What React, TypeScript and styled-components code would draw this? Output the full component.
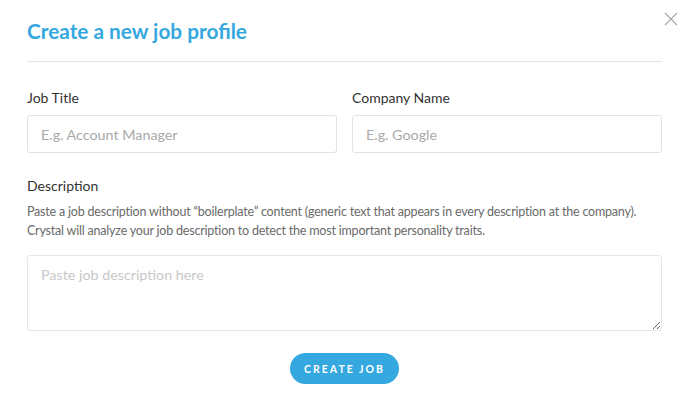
import React from "react";
import styled, { createGlobalStyle } from "styled-components";

const GlobalStyle = createGlobalStyle`
  html, body {
    margin: 0;
    padding: 0;
    background: #fff;
    font-family: Lato, "Open Sans", sans-serif;
  }
  * { box-sizing: border-box; }
`;

const Modal = styled.div`
  position: relative;
  width: 688px;
  height: 411px;
  padding: 16px 26px 0 27px;
  background: #fff;
`;

const Title = styled.h2`
  margin: 0;
  font-size: 20.8px;
  font-weight: 700;
  line-height: 30px;
  color: #35a8e0;
`;

const Divider = styled.hr`
  margin: 15px 0 0;
  border: 0;
  border-top: 1px solid #e3e3e3;
`;

const CloseButton = styled.button`
  position: absolute;
  top: 10px;
  right: 8px;
  width: 18px;
  height: 18px;
  padding: 0;
  border: 0;
  background: none;
  color: #a8a8a8;
  cursor: pointer;
`;

const Row = styled.div`
  display: grid;
  grid-template-columns: 1fr 1fr;
  gap: 15px;
  margin-top: 26px;
`;

const Field = styled.div`
  display: flex;
  flex-direction: column;
`;

const Label = styled.label<{ $gap?: number }>`
  font-size: 14px;
  line-height: 20px;
  color: #333;
  margin-bottom: ${(p) => p.$gap ?? 7}px;
`;

const Input = styled.input`
  height: 38px;
  padding: 0 13px;
  border: 1px solid #e2e2e2;
  border-radius: 3px;
  font-family: inherit;
  font-size: 14.3px;
  color: #333;
  outline: none;
  &::placeholder {
    color: #a9a9a9;
  }
`;

const Description = styled.div`
  margin-top: 23px;
  display: flex;
  flex-direction: column;
`;

const Help = styled.p`
  margin: 0;
  font-size: 12.5px;
  letter-spacing: -0.2px;
  line-height: 19px;
  color: #6a6a6a;
  white-space: nowrap;
`;

const TextArea = styled.textarea`
  margin-top: 15px;
  height: 76px;
  padding: 9px 13px;
  border: 1px solid #e6e6e6;
  border-radius: 3px;
  font-family: inherit;
  font-size: 14.3px;
  line-height: 20px;
  color: #333;
  resize: vertical;
  outline: none;
  &::placeholder {
    color: #c8c8c8;
  }
`;

const Actions = styled.div`
  display: flex;
  justify-content: center;
  margin-top: 22px;
`;

const PrimaryButton = styled.button`
  height: 31px;
  padding: 0 14px;
  border: 0;
  border-radius: 16px;
  background: #35a8e0;
  color: #fff;
  font-family: inherit;
  font-size: 10.5px;
  font-weight: 700;
  letter-spacing: 2px;
  cursor: pointer;
`;

export default function App() {
  return (
    <>
      <GlobalStyle />
      <Modal>
        <CloseButton aria-label="Close">
          <svg width="18" height="18" viewBox="0 0 18 18">
            <path d="M3 3 L15 15 M15 3 L3 15" stroke="currentColor" strokeWidth="1.2" />
          </svg>
        </CloseButton>
        <Title>Create a new job profile</Title>
        <Divider />
        <Row>
          <Field>
            <Label>Job Title</Label>
            <Input placeholder="E.g. Account Manager" />
          </Field>
          <Field>
            <Label>Company Name</Label>
            <Input placeholder="E.g. Google" />
          </Field>
        </Row>
        <Description>
          <Label $gap={6}>Description</Label>
          <Help>
            Paste a job description without “boilerplate” content (generic text that appears in every description at the company).
            <br />
            Crystal will analyze your job description to detect the most important personality traits.
          </Help>
          <TextArea placeholder="Paste job description here" />
        </Description>
        <Actions>
          <PrimaryButton>CREATE JOB</PrimaryButton>
        </Actions>
      </Modal>
    </>
  );
}
